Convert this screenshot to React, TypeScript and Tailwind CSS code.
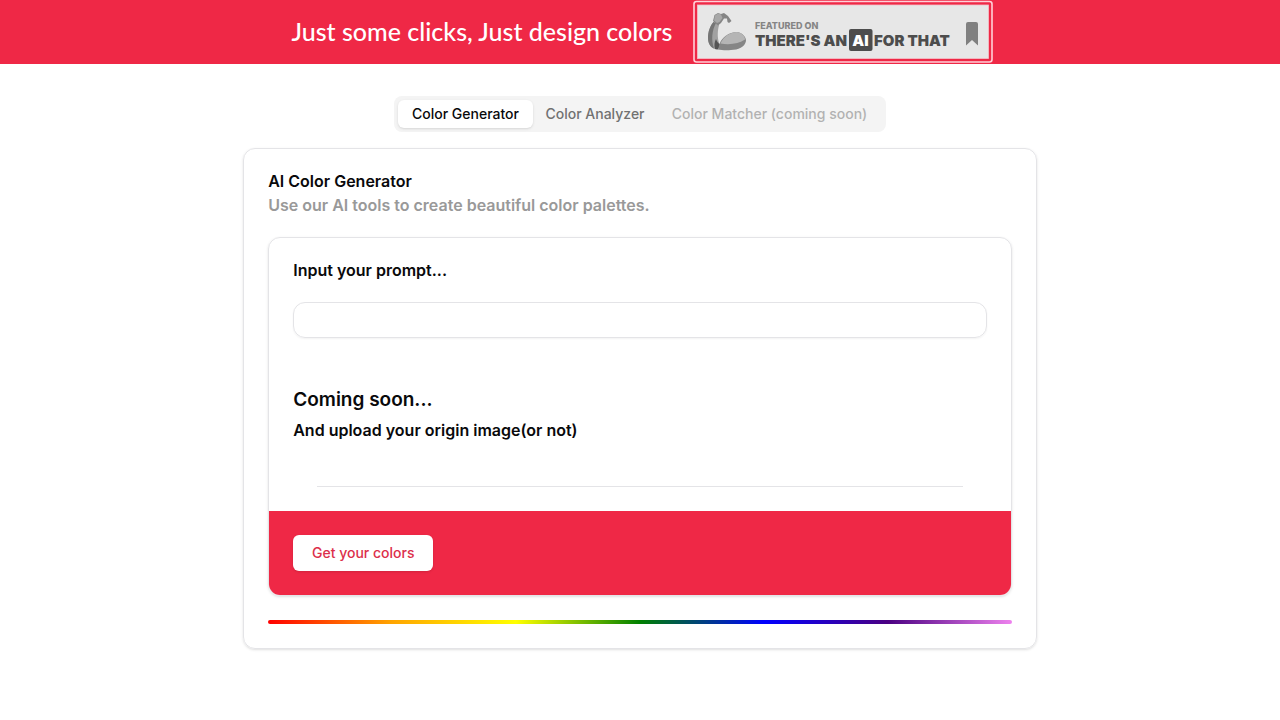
import { useState } from "react";

const TABS = [
  { id: "generator", label: "Color Generator", disabled: false, width: "min-w-[135px]" },
  { id: "analyzer", label: "Color Analyzer", disabled: false, width: "min-w-[124px]" },
  { id: "matcher", label: "Color Matcher (coming soon)", disabled: true, width: "min-w-[225px]" },
];

function FeaturedBadge() {
  return (
    <a href="#featured" aria-label="Featured on There's an AI for that" className="block shrink-0">
      <svg width="300" height="64" viewBox="0 0 300 64" fontFamily="Inter, sans-serif">
        <rect x="1" y="1.5" width="298" height="60.5" rx="2.5" fill="#ef2846" stroke="#ffd0d8" strokeWidth="1.6" />
        <rect x="4.5" y="5" width="291" height="53.5" fill="#e7e7e7" stroke="#f3c3ca" strokeWidth="0.8" />
        <path d="M20.5 22 C17 26 15 32 15 38 C15 44 18 48.5 24 49.5 L27 45 C24.5 40 24 33 26 25 Z" fill="#a2a2a2" />
        <path d="M20.5 22 C17 26 15 32 15 38 C15 43 17 47 21 48.5 C18 40 19 30 23 23 Z" fill="#757575" />
        <path d="M23 39 C24 42 25.5 43.5 27.5 45 L25 49.5 L22 49 C21 45 21.5 42 23 39 Z" fill="#555555" />
        <path d="M26.5 44 C29 37 36 32 44 32 C50 33 53 37 53 41 C52 47 45 50 38 50 C33 50.5 28 50 25 49.5 Z" fill="#858585" />
        <path d="M27.5 43.5 C30 37 37 32 44 32 C49 33 52 36 52 39.5 C46 44 36 45 27.5 43.5 Z" fill="#b5b5b5" />
        <path d="M20 21 L21.5 15 L25 13 L28 14 L31 13 L35 16 L38.5 21 L36 23 L34.5 22 L34 18.5 L31 18.5 L28 23 L25 25.5 Z" fill="#858585" />
        <path d="M21 20.5 L22 15.5 L25 13.5 L28 14.5 L29.5 18 L26.5 22 L24 23 Z" fill="#a8a8a8" />
        <text x="62" y="28.5" fontSize="9" fontWeight="800" fill="#858585">FEATURED ON</text>
        <text x="62" y="45.5" fontSize="15" fontWeight="900" fill="#4d4d4d">THERE'S AN</text>
        <rect x="156" y="29" width="23.5" height="22" rx="2" fill="#4d4d4d" />
        <text x="167.5" y="45.5" fontSize="15" fontWeight="900" fill="#ffffff" textAnchor="middle">AI</text>
        <text x="181" y="45.5" fontSize="15" fontWeight="900" fill="#4d4d4d">FOR THAT</text>
        <path d="M273 24 Q273 22 275 22 H283 Q285 22 285 24 V45.5 L279 40 L273 45.5 Z" fill="#808080" />
      </svg>
    </a>
  );
}

export default function App() {
  const [active, setActive] = useState("generator");

  return (
    <div className="min-h-screen bg-white font-['Inter',sans-serif] text-[#09090b]">
      <header className="flex h-16 items-center justify-center gap-4 bg-[#ef2846]">
        <h1 className="min-w-[390px] text-center font-['Lato',sans-serif] text-[25px] font-medium whitespace-nowrap text-white">
          Just some clicks, Just design colors
        </h1>
        <FeaturedBadge />
      </header>

      <main className="flex flex-col items-center pt-8">
        <div role="tablist" className="flex h-9 items-center rounded-lg bg-[#f4f4f4] p-1">
          {TABS.map((tab) => (
            <button
              key={tab.id}
              type="button"
              role="tab"
              aria-selected={active === tab.id}
              disabled={tab.disabled}
              onClick={() => setActive(tab.id)}
              className={
                "rounded-md px-3 py-1 text-sm font-medium whitespace-nowrap disabled:opacity-50 " +
                tab.width +
                (active === tab.id ? " bg-white text-[#09090b] shadow-sm" : " text-[#717171]")
              }
            >
              {tab.label}
            </button>
          ))}
        </div>

        <section className="mt-4 w-[62%] rounded-xl border border-[#e4e4e7] p-6 shadow-sm">
          <h2 className="leading-4 font-semibold">AI Color Generator</h2>
          <p className="mt-1 leading-6 font-semibold text-[#999999]">
            Use our AI tools to create beautiful color palettes.
          </p>

          <form
            onSubmit={(event) => event.preventDefault()}
            className="mt-5 overflow-hidden rounded-xl border border-[#e4e4e7] shadow-sm"
          >
            <div className="p-6">
              <label htmlFor="prompt" className="block leading-4 font-semibold">
                Input your prompt...
              </label>
              <input
                id="prompt"
                type="text"
                className="mt-6 block h-9 w-full rounded-xl border border-[#e4e4e7] px-3 text-sm shadow-xs outline-none"
              />
              <h3 className="mt-12 text-[19px] leading-7 font-semibold">Coming soon...</h3>
              <p className="mt-2 leading-4 font-semibold">And upload your origin image(or not)</p>
              <hr className="mx-6 mt-12 border-[#e4e4e7]" />
            </div>
            <div className="bg-[#ef2846] p-6">
              <button
                type="submit"
                className="block h-9 min-w-[140px] rounded-md bg-white px-4 text-sm font-medium text-[#dc2f4b] shadow-sm"
              >
                Get your colors
              </button>
            </div>
          </form>

          <div className="mt-6 h-1 rounded-sm bg-[linear-gradient(to_right,red,orange,yellow,green,blue,indigo,violet)]" />
        </section>
      </main>
    </div>
  );
}
